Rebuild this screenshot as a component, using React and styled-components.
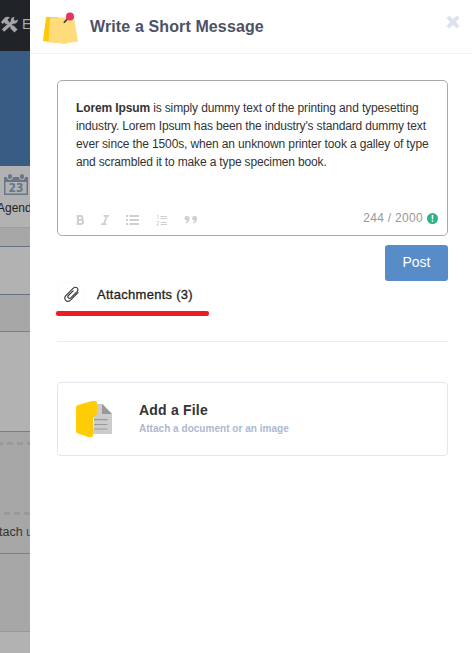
import React from 'react';
import styled, { createGlobalStyle } from 'styled-components';

const Global = createGlobalStyle`
  * { box-sizing: border-box; }
  body { margin: 0; overflow: hidden; background: #fff; font-family: "Liberation Sans", Arial, sans-serif; }
  svg { display: block; flex: none; }
`;

const Screen = styled.div`
  display: flex;
  width: 472px;
  height: 653px;
  overflow: hidden;
`;

/* Dimmed page visible beside the drawer */
const Backdrop = styled.aside`
  width: 30px;
  flex: none;
  overflow: hidden;
  white-space: nowrap;
  background: #a7a7a7;
`;
const TopBar = styled.div`
  height: 51px;
  background: #202428;
  color: #a9abad;
  display: flex;
  align-items: flex-start;
  padding-top: 16px;
  font-size: 14px;
  line-height: 16px;
  gap: 3px;
`;
const Banner = styled.div`
  height: 115px;
  background: #395c85;
`;
const Tab = styled.div`
  height: 62px;
  padding: 8px 0 0 4px;
  background: #b2b2b2;
  border-bottom: 1px solid #9d9d9d;
`;
const TabLabel = styled.div`
  margin: 5px 0 0 -7px;
  font-size: 12px;
  line-height: 14px;
  color: #222;
`;
const Band = styled.div`
  height: ${(p) => p.$h}px;
  background: ${(p) => (p.$light ? '#b2b2b2' : '#a7a7a7')};
  border-bottom: 1px solid ${(p) => p.$line || '#7e7e7e'};
`;
const DropZone = styled.div`
  height: 122px;
  padding-top: 10px;
  border-bottom: 1px solid #7e7e7e;
`;
const Dashes = styled.div`
  height: 3px;
  background: repeating-linear-gradient(90deg, #999 0 6px, transparent 6px 10px);
  background-position-x: ${(p) => p.$shift}px;
`;
const ZoneText = styled.div`
  margin: 9px 0 0 -1px;
  font-size: 12.5px;
  line-height: 16px;
  color: #333;
`;
const ZoneLink = styled.span`color: #2b4d76;`;
const ZoneGap = styled.div`height: 67px;`;

const Drawer = styled.main`
  width: 442px;
  background: #fff;
`;
const Header = styled.header`
  height: 54px;
  display: flex;
  border-bottom: 1px solid #f1f2f4;
  padding: 12px 12px 0 13px;
`;
const Title = styled.h1`
  margin: 5px 0 0 12px;
  font-size: 16px;
  line-height: 20px;
  letter-spacing: 0.12px;
  color: #4c5267;
  flex: 1;
  white-space: nowrap;
`;
const Close = styled.button`
  border: 0;
  padding: 0;
  margin-top: 3px;
  width: 14px;
  height: 14px;
  background: none;
`;
const Content = styled.div`
  padding: 26px 24px 0 27px;
  display: flex;
  flex-direction: column;
`;
const Editor = styled.section`
  height: 156px;
  border: 1px solid #aaa;
  border-radius: 5px;
  padding: 18px 9px 0 18px;
  display: flex;
  flex-direction: column;
`;
const Message = styled.p`
  margin: 0;
  height: 109px;
  font-size: 12px;
  line-height: 18px;
  color: #333;
  white-space: nowrap;
`;
const Line = styled.span`
  display: block;
  letter-spacing: ${(p) => p.$track || 0}px;
`;
const Toolbar = styled.div`
  display: flex;
  height: 20px;
  align-items: center;
`;
const Formats = styled.div`
  padding-top: 4px;
`;
const Count = styled.span`
  margin-left: auto;
  margin-right: 4px;
  font-size: 12px;
  line-height: 16px;
  letter-spacing: 0.3px;
  color: #999;
`;
const Post = styled.button`
  width: 63px;
  height: 36px;
  margin: 9px 0 0;
  padding: 0 0 2px;
  align-self: flex-end;
  border: 0;
  border-radius: 3px;
  background: #578cc9;
  color: #fff;
  font: 14px "Liberation Sans", Arial, sans-serif;
`;
const Attachments = styled.div`
  height: 28px;
  display: flex;
  align-items: center;
`;
const ClipCircle = styled.span`
  width: 28px;
  height: 28px;
  border: 1px solid #fafafa;
  border-radius: 50%;
  display: flex;
  align-items: center;
  justify-content: center;
`;
const AttachmentLabel = styled.span`
  margin-left: 12px;
  font-size: 13px;
  line-height: 16px;
  letter-spacing: 0.28px;
  color: #222;
  -webkit-text-stroke: 0.3px #222;
  white-space: nowrap;
`;
const RedMark = styled.div`
  width: 153px;
  height: 5px;
  margin: 2px 0 0 -1px;
  border-radius: 2px;
  background: #ed1c24;
`;
const Divider = styled.div`
  height: 1px;
  margin: 25px 0 40px;
  background: #ebedf0;
`;
const FileCard = styled.section`
  height: 74px;
  border: 1px solid #e2e7ed;
  border-radius: 4px;
  display: flex;
  padding: 18px;
`;
const FileText = styled.div`
  margin-left: 26px;
  white-space: nowrap;
`;
const FileTitle = styled.h2`
  margin: 0;
  font-size: 14px;
  line-height: 18px;
  letter-spacing: 0.2px;
  color: #333;
`;
const FileHint = styled.div`
  margin-top: 3px;
  font-size: 10px;
  line-height: 14px;
  letter-spacing: 0.03px;
  font-weight: bold;
  color: #adb8d0;
`;

const ToolsIcon = () => (
  <svg width="19" height="17" viewBox="0 0 19 17" fill="none" stroke="#a3a5a7" strokeLinecap="butt">
    <path d="M3 14.5 13.5 5" strokeWidth="3.4" />
    <path d="M18 3.5l-2.8 1.2-1.5-1.2L14.5 1a3.9 3.9 0 0 0-3.7 4l2.3 2.6A4 4 0 0 0 18 3.5z" fill="#a3a5a7" stroke="none" />
    <path d="M1 6 5 1.5Q7 0 10 1.5L7.5 3.5 9 6 6 8.5 4.5 6.5 2.7 8z" fill="#a3a5a7" stroke="none" />
    <path d="M11.5 10.5 16 15" strokeWidth="4.2" />
    <path d="M7 6 13 12" strokeWidth="2.4" />
  </svg>
);
const CalendarIcon = () => (
  <svg width="24" height="22" viewBox="0 0 24 22">
    <path d="M0 3H24V21H0z" fill="#69768a" />
    <path d="M1.5 8H22.5V19.5H1.5z" fill="#b2b2b2" />
    <circle cx="6" cy="3" r="3" fill="#b2b2b2" /><circle cx="18" cy="3" r="3" fill="#b2b2b2" />
    <rect x="4" y="0" width="4" height="5" rx="2" fill="#69768a" />
    <rect x="16" y="0" width="4" height="5" rx="2" fill="#69768a" />
    <text x="12" y="18" textAnchor="middle" fill="#69768a" fontFamily="DejaVu Sans, sans-serif" fontSize="12" fontWeight="bold" textLength="15" lengthAdjust="spacingAndGlyphs">23</text>
  </svg>
);
const NotesIcon = () => (
  <svg width="35" height="33" viewBox="0 0 35 33">
    <path d="M3 5H15V31L0 29z" fill="#ffc905" />
    <path d="M7 5.5H31L35 29.5Q28 30 21 32 15 30 5.5 30.5z" fill="#ffdc7b" />
    <path d="M20.8 10.8 26 5.5" stroke="#353535" strokeWidth="1.6" />
    <circle cx="27" cy="4.5" r="4" fill="#e83262" />
  </svg>
);
const CloseIcon = () => (
  <svg width="14" height="14" viewBox="0 0 14 14"><path d="M1.8 1.8 12.2 12.2M12.2 1.8 1.8 12.2" stroke="#dce3ef" strokeWidth="4" /></svg>
);
const FormatIcons = () => (
  <svg width="130" height="14" viewBox="0 0 130 14" fill="none" stroke="#cfcfcf">
    <path d="M0.5 3H4.5a1.9 1.9 0 0 1 0 3.8H1M2 2.5V11.5M0.5 11H5a2.1 2.1 0 0 0 0-4.2" strokeWidth="2" />
    <path d="M27.5 2.8H33M25 11.2H30.5M30.8 2.8 27.8 11.2" strokeWidth="1.8" />
    <path d="M50 3H52M53.5 3H63M50 7H52M53.5 7H63M50 11H52M53.5 11H63" strokeWidth="2" />
    <path d="M84.5 3.5H91M84.5 5.5H91M84.5 9.5H91M84.5 11.5H91" strokeWidth="1" />
    <path d="M81 2.5H82V6M80.5 8.5H82.5V10L80.5 12H83" strokeWidth="0.9" />
    <g fill="#cfcfcf" stroke="none">
      <path d="M108.5 5.3a2.5 2.5 0 1 1 5 .4c0 2.6-1.2 4-3.5 4.9l-.6-1.2c1.1-.6 1.8-1.1 1.9-2A2.4 2.4 0 0 1 108.5 5.3z" />
      <path d="M116 5.3a2.5 2.5 0 1 1 5 .4c0 2.6-1.2 4-3.5 4.9l-.6-1.2c1.1-.6 1.8-1.1 1.9-2A2.4 2.4 0 0 1 116 5.3z" />
    </g>
  </svg>
);
const InfoIcon = () => (
  <svg width="11" height="11" viewBox="0 0 11 11">
    <circle cx="5.5" cy="5.5" r="5.5" fill="#2eb38b" />
    <path d="M5.5 2V6.3M5.5 7.2V8.7" stroke="#fff" strokeWidth="1.5" />
  </svg>
);
const ClipIcon = () => (
  <svg width="18" height="18" viewBox="0 0 18 18" fill="none" stroke="#333" strokeWidth="1.1" strokeLinecap="round" strokeLinejoin="round">
    <path transform="translate(0.8 -0.4)" d="M10.3 5.2 5.6 9.9C4 11.6 6.2 13.8 8 12.2L14.3 6C17 3 13 .2 10.3 2.8L3.3 9.8C-.1 13.3 4.2 17.8 8 14.3L15.2 7.1" />
  </svg>
);
const FileIcon = () => (
  <svg width="37" height="37" viewBox="0 0 37 37">
    <path d="M19 3H27L36 13V33H17z" fill="#ccc" />
    <path d="M26 3V13H36z" fill="#999" />
    <path d="M0 6Q0 4.8 2 4L15 .3Q21-1 21 2V12Q21 14 19 15 17 16 17 19V34Q17 37 12 36L2 32.5Q0 32 0 30z" fill="#ffcc05" />
    <path d="M18.5 18.7H31M18.5 23.5H31M18.5 28H31" stroke="#999" strokeWidth="1.2" strokeLinecap="round" />
  </svg>
);

export default function App() {
  return (
    <>
      <Global />
      <Screen>
        <Backdrop>
          <TopBar><ToolsIcon />E</TopBar>
          <Banner />
          <Tab><CalendarIcon /><TabLabel>Agenda</TabLabel></Tab>
          <Band $h={19} $line="#68727f" />
          <Band $h={48} $light $line="#68727f" />
          <Band $h={37} />
          <Band $h={100} $light />
          <DropZone>
            <Dashes $shift={-3} />
            <ZoneGap />
            <Dashes $shift={4} />
            <ZoneText>tach <ZoneLink>up</ZoneLink></ZoneText>
          </DropZone>
          <Band $h={78} $line="#999" />
          <Band $h={22} $light $line="#b2b2b2" />
        </Backdrop>
        <Drawer>
          <Header>
            <NotesIcon />
            <Title>Write a Short Message</Title>
            <Close aria-label="Close"><CloseIcon /></Close>
          </Header>
          <Content>
            <Editor>
              <Message>
                <Line $track={-0.13}><b>Lorem Ipsum</b> is simply dummy text of the printing and typesetting</Line>
                <Line $track={-0.15}>industry. Lorem Ipsum has been the industry's standard dummy text</Line>
                <Line $track={-0.135}>ever since the 1500s, when an unknown printer took a galley of type</Line>
                <Line $track={-0.15}>and scrambled it to make a type specimen book.</Line>
              </Message>
              <Toolbar>
                <Formats><FormatIcons /></Formats>
                <Count>244 / 2000</Count>
                <InfoIcon />
              </Toolbar>
            </Editor>
            <Post>Post</Post>
            <Attachments>
              <ClipCircle><ClipIcon /></ClipCircle>
              <AttachmentLabel>Attachments (3)</AttachmentLabel>
            </Attachments>
            <RedMark />
            <Divider />
            <FileCard>
              <FileIcon />
              <FileText>
                <FileTitle>Add a File</FileTitle>
                <FileHint>Attach a document or an image</FileHint>
              </FileText>
            </FileCard>
          </Content>
        </Drawer>
      </Screen>
    </>
  );
}
